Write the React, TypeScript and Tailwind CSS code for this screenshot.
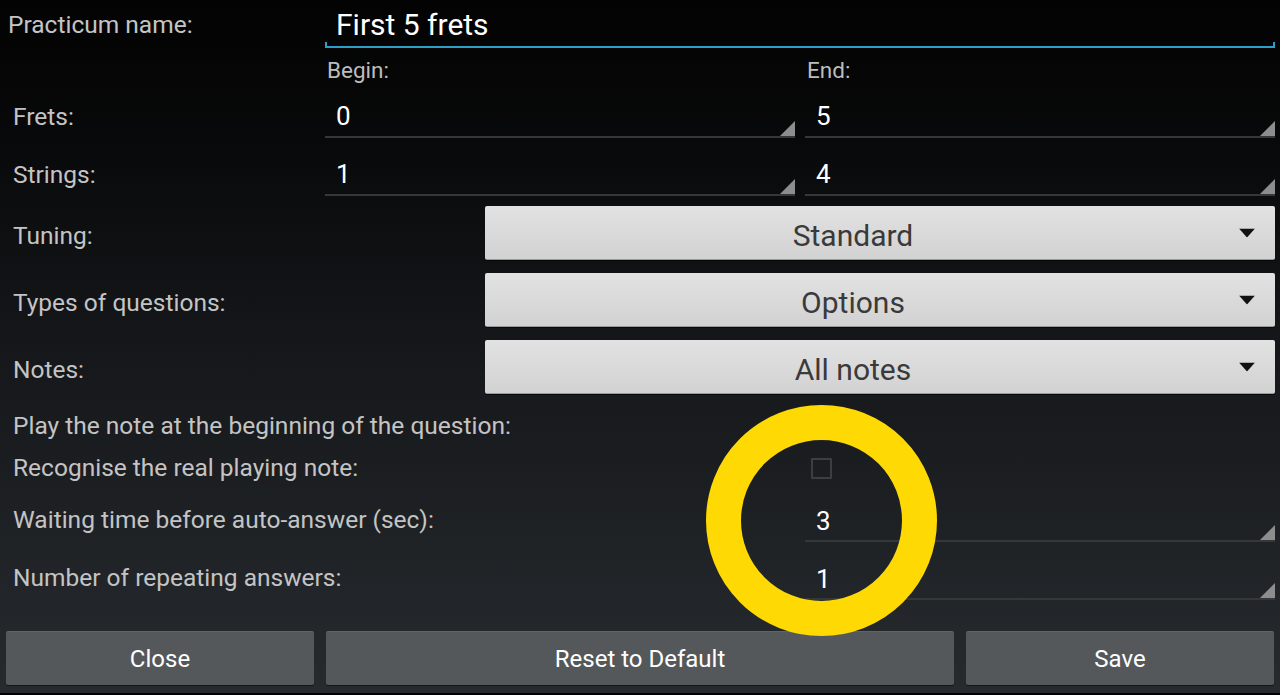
import type { ReactNode } from "react";

function Corner() {
  return (
    <svg
      className="absolute bottom-0 right-0"
      width="15"
      height="15"
      viewBox="0 0 15 15"
    >
      <polygon points="15,0 15,15 0,15" fill="#8d8d8d" />
    </svg>
  );
}

function EditField({ value, className }: { value: string; className?: string }) {
  return (
    <div
      className={
        "relative flex h-full items-center border-b-2 border-[#363738] pl-[11px] text-[26px] text-white " +
        (className ?? "")
      }
    >
      <span className="-mb-1">{value}</span>
      <Corner />
    </div>
  );
}

function Spinner({ value }: { value: string }) {
  return (
    <div className="relative flex h-[54px] flex-1 items-center justify-center rounded-[2px] border-b border-[#9a9a9a] bg-gradient-to-b from-[#e2e2e2] to-[#d2d2d2] pr-[54px] pt-[5px] text-[30px] text-[#3a3a3a] shadow-[0_1px_0_rgba(0,0,0,0.6)]">
      <span>{value}</span>
      <svg
        className="absolute right-[20px] top-1/2 -translate-y-1/2"
        width="16"
        height="9"
        viewBox="0 0 16 9"
      >
        <polygon points="0,0 16,0 8,9" fill="#111" />
      </svg>
    </div>
  );
}

function Label({ children, className }: { children: ReactNode; className?: string }) {
  return (
    <div className={"text-[24.5px] text-[#c4c4c4] " + (className ?? "")}>{children}</div>
  );
}

function FooterButton({ children, className }: { children: ReactNode; className?: string }) {
  return (
    <button
      type="button"
      className={
        "flex h-[54px] items-center justify-center rounded-[2px] border-t border-[#606467] bg-[#54585b] text-[24px] text-white shadow-[0_1px_0_rgba(0,0,0,0.5)] " +
        (className ?? "")
      }
    >
      {children}
    </button>
  );
}

export default function App() {
  return (
    <div
      className="relative h-[695px] w-[1280px] overflow-hidden bg-gradient-to-b from-[#030303] via-[#15171a] to-[#272b2f]"
      style={{ fontFamily: "Roboto, 'Noto Sans', sans-serif" }}
    >
      <div className="flex h-[693px] flex-col pr-[5px]">
        {/* name */}
        <div className="flex h-[48px] items-stretch">
          <div className="flex w-[325px] items-center pl-[8px] pt-[2px]">
            <Label>Practicum name:</Label>
          </div>
          <div className="relative flex flex-1 items-center pl-[11px] text-[30px] text-white">
            <span className="-mb-[1px]">First 5 frets</span>
            <div className="absolute bottom-0 left-0 right-0 h-[2px] bg-[#2f9fc8]" />
            <div className="absolute bottom-0 left-0 h-[6px] w-[2px] bg-[#2f9fc8]" />
            <div className="absolute bottom-0 right-0 h-[6px] w-[2px] bg-[#2f9fc8]" />
          </div>
        </div>

        {/* begin / end */}
        <div className="flex h-[44px] items-center pl-[327px] pt-[2px] text-[22.5px] text-[#bdbdbd]">
          <div className="w-[480px]">Begin:</div>
          <div>End:</div>
        </div>

        {/* frets */}
        <div className="flex h-[46px] items-stretch">
          <div className="flex w-[325px] items-center pl-[13px] pt-[4px]">
            <Label>Frets:</Label>
          </div>
          <div className="flex flex-1 gap-[10px]">
            <EditField value="0" className="flex-1" />
            <EditField value="5" className="flex-1" />
          </div>
        </div>

        {/* strings */}
        <div className="mt-[12px] flex h-[46px] items-stretch">
          <div className="flex w-[325px] items-center pl-[13px] pt-[4px]">
            <Label>Strings:</Label>
          </div>
          <div className="flex flex-1 gap-[10px]">
            <EditField value="1" className="flex-1" />
            <EditField value="4" className="flex-1" />
          </div>
        </div>

        {/* spinners */}
        <div className="mt-[10px] flex flex-col gap-[13px]">
          {[
            ["Tuning:", "Standard"],
            ["Types of questions:", "Options"],
            ["Notes:", "All notes"],
          ].map(([label, value]) => (
            <div key={label} className="flex items-center">
              <div className="w-[485px] pl-[13px] pt-[7px]">
                <Label>{label}</Label>
              </div>
              <Spinner value={value} />
            </div>
          ))}
        </div>

        {/* play note */}
        <div className="mt-[16px] flex h-[32px] items-center pl-[13px]">
          <Label>Play the note at the beginning of the question:</Label>
        </div>

        {/* recognise */}
        <div className="mt-[10px] flex h-[32px] items-center">
          <div className="w-[811px] pl-[13px]">
            <Label>Recognise the real playing note:</Label>
          </div>
          <div className="h-[21px] w-[21px] rounded-[1px] border-2 border-[#3c3f42]" />
        </div>

        {/* waiting */}
        <div className="mt-[14px] flex h-[44px] items-stretch">
          <div className="flex w-[805px] items-center pl-[13px]">
            <Label>Waiting time before auto-answer (sec):</Label>
          </div>
          <EditField value="3" className="flex-1" />
        </div>

        {/* repeating */}
        <div className="mt-[14px] flex h-[44px] items-stretch">
          <div className="flex w-[805px] items-center pl-[13px]">
            <Label>Number of repeating answers:</Label>
          </div>
          <EditField value="1" className="flex-1" />
        </div>

        {/* footer */}
        <div className="mt-[31px] flex gap-[12px] pl-[6px] pr-px">
          <FooterButton className="w-[308px]">Close</FooterButton>
          <FooterButton className="flex-1">Reset to Default</FooterButton>
          <FooterButton className="w-[308px]">Save</FooterButton>
        </div>
      </div>
      <div className="h-[2px] bg-black" />

      {/* annotation ring */}
      <div className="pointer-events-none absolute left-[706px] top-[405px] h-[231px] w-[231px] rounded-full border-[35px] border-[#ffd903]" />
    </div>
  );
}
